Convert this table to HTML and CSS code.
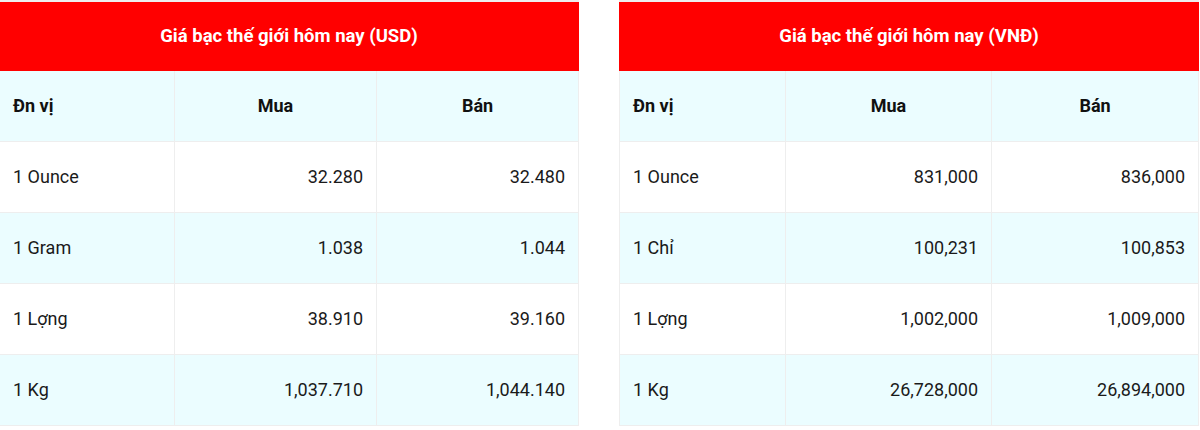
FILE: index.html
```html
<!DOCTYPE html>
<html lang="vi">
<head>
<meta charset="utf-8">
<title>Giá bạc thế giới hôm nay</title>
<link rel="stylesheet" href="styles.css">
</head>
<body>
<div class="wrap">
  <table class="price usd">
    <colgroup><col class="c1"><col class="c2"><col class="c3"></colgroup>
    <thead>
      <tr class="title"><th colspan="3">Giá bạc thế giới hôm nay (USD)</th></tr>
      <tr class="head"><th class="unit">Đn vị</th><th>Mua</th><th>Bán</th></tr>
    </thead>
    <tbody>
      <tr><td class="unit">1 Ounce</td><td>32.280</td><td>32.480</td></tr>
      <tr class="alt"><td class="unit">1 Gram</td><td>1.038</td><td>1.044</td></tr>
      <tr><td class="unit">1 Lợng</td><td>38.910</td><td>39.160</td></tr>
      <tr class="alt"><td class="unit">1 Kg</td><td>1,037.710</td><td>1,044.140</td></tr>
    </tbody>
  </table>
  <table class="price vnd">
    <colgroup><col class="c1"><col class="c2"><col class="c3"></colgroup>
    <thead>
      <tr class="title"><th colspan="3">Giá bạc thế giới hôm nay (VNĐ)</th></tr>
      <tr class="head"><th class="unit">Đn vị</th><th>Mua</th><th>Bán</th></tr>
    </thead>
    <tbody>
      <tr><td class="unit">1 Ounce</td><td>831,000</td><td>836,000</td></tr>
      <tr class="alt"><td class="unit">1 Chỉ</td><td>100,231</td><td>100,853</td></tr>
      <tr><td class="unit">1 Lợng</td><td>1,002,000</td><td>1,009,000</td></tr>
      <tr class="alt"><td class="unit">1 Kg</td><td>26,728,000</td><td>26,894,000</td></tr>
    </tbody>
  </table>
</div>
</body>
</html>
```
FILE: styles.css
```css
html, body {
  margin: 0;
  padding: 0;
  background: #ffffff;
}
body {
  font-family: Roboto, "Liberation Sans", Arial, sans-serif;
  color: #1a1a1a;
}
.wrap {
  display: flex;
  gap: 40px;
  margin-left: -1px;
}
.price {
  border-collapse: collapse;
  table-layout: fixed;
  width: 579px;
  flex: none;
}
.usd .c1 { width: 175px; }
.usd .c2 { width: 202px; }
.usd .c3 { width: 202px; }
.vnd .c1 { width: 166px; }
.vnd .c2 { width: 206px; }
.vnd .c3 { width: 207px; }
.price th, .price td {
  border: 1px solid #eeeeee;
  padding: 0 13px;
  height: 71px;
  box-sizing: border-box;
  font-size: 18px;
}
.price td {
  text-align: right;
  font-weight: 400;
}
.price .unit {
  text-align: left;
}
.title th {
  background: #ff0000;
  color: #ffffff;
  font-size: 18.5px;
  font-weight: 700;
  text-align: center;
  height: 69px;
  border-color: #ff0000;
  border-top: 2px solid #eeeeee;
}
.head th {
  background: #ebfdff;
  font-weight: 700;
  text-align: center;
  color: #111111;
}
.head th.unit {
  text-align: left;
}
.alt td {
  background: #ebfdff;
}
```
